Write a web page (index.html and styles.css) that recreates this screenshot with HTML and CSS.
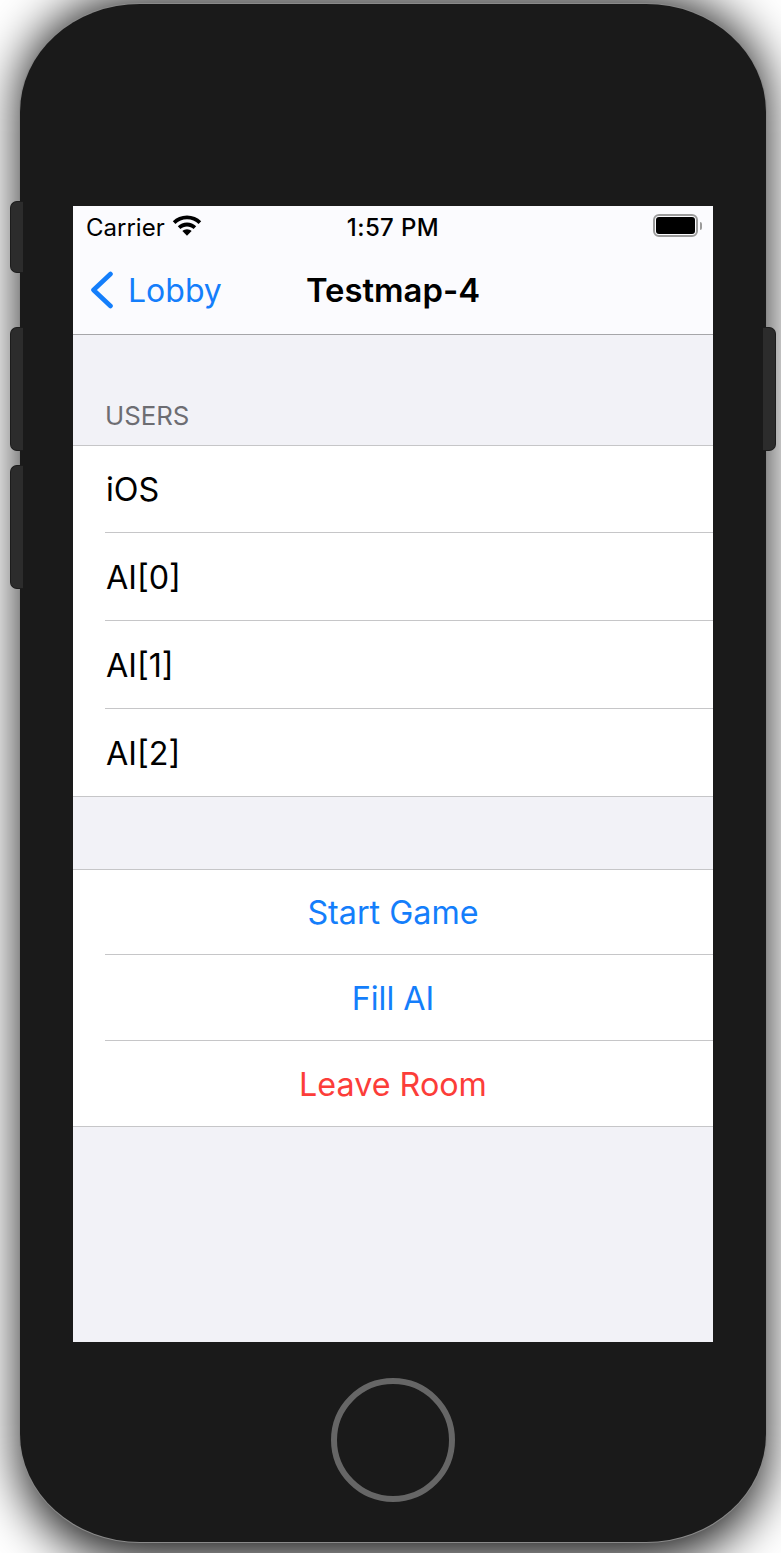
FILE: index.html
```html
<!DOCTYPE html>
<html lang="en">
<head>
  <meta charset="UTF-8">
  <title>Testmap-4</title>
  <link rel="stylesheet" href="styles.css">
</head>
<body>

  <div class="phone">
    <span class="side-btn mute"></span>
    <span class="side-btn vol-up"></span>
    <span class="side-btn vol-down"></span>
    <span class="side-btn power"></span>

    <div class="screen">
      <header class="top">
        <div class="status">
          <div class="status-left">
            <span>Carrier</span>
            <svg class="wifi" width="30" height="22" viewBox="0 0 30 22">
              <path d="M15 1.5C9.4 1.5 4.4 3.7.8 7.3l2.6 2.8C6.4 7.1 10.5 5.3 15 5.3s8.6 1.8 11.6 4.8l2.6-2.8C25.6 3.7 20.6 1.500 15 1.500z" fill="#000"/>
              <path d="M15 8.600c-3.500 0-6.800 1.400-9.200 3.700l2.600 2.800c1.700-1.700 4-2.700 6.600-2.700s4.900 1 6.600 2.700l2.600-2.800C21.800 10 18.500 8.600 15 8.600z" fill="#000"/>
              <path d="M15 15.200c-1.800 0-3.400.7-4.600 1.800L15 21.800l4.600-4.800c-1.200-1.100-2.800-1.800-4.600-1.800z" fill="#000"/>
            </svg>
          </div>
          <span class="clock">1:57 PM</span>
          <div class="battery">
            <span class="battery-body"><span class="battery-fill"></span></span>
            <span class="battery-cap"></span>
          </div>
        </div>
        <nav class="navbar">
          <a class="back">
            <svg width="26" height="38" viewBox="0 0 26 38">
              <path d="M21.5 3 L4.5 19 L21.5 35" fill="none" stroke="#147efb" stroke-width="4.6" stroke-linecap="round" stroke-linejoin="round"/>
            </svg>
            <span>Lobby</span>
          </a>
          <h1 class="title">Testmap-4</h1>
        </nav>
      </header>

      <div class="section-head">USERS</div>
      <ul class="list">
        <li class="row">iOS</li>
        <li class="row">AI[0]</li>
        <li class="row">AI[1]</li>
        <li class="row">AI[2]</li>
      </ul>

      <div class="spacer"></div>

      <ul class="list actions">
        <li class="row action">Start Game</li>
        <li class="row action">Fill AI</li>
        <li class="row action danger">Leave Room</li>
      </ul>
    </div>

    <div class="home-btn"></div>
  </div>

</body>
</html>
```

FILE: styles.css
```css
* {
  box-sizing: border-box;
}
html, body {
  margin: 0;
  height: 100%;
}
body {
  background-color: #fff;
  font-family: Inter, "Liberation Sans", sans-serif;
  color: #000;
  overflow: hidden;
  padding: 4px 15px 0 20px;
}

/* device */
.phone {
  position: relative;
  width: 746px;
  height: 1538px;
  padding: 202px 53px 0;
  background-color: #1a1a1a;
  border-radius: 120px / 108px;
  box-shadow: 0 0 0 1px #8a8a8a;
}
/* shadow reaches further above and below than at the sides */
.phone::before {
  content: "";
  position: absolute;
  top: -7px;
  bottom: -18px;
  left: 0;
  right: 0;
  z-index: -1;
  border-radius: 120px / 108px;
  background-color: rgba(0,0,0,0.9);
  filter: blur(25px);
}
.side-btn {
  position: absolute;
  width: 13px;
  background-color: #2c2c2c;
  border: 1px solid #1c1c1c;
}
.mute, .vol-up, .vol-down {
  left: -10px;
  border-radius: 7px 0 0 7px;
  border-right: none;
}
.mute {
  top: 197px;
  height: 72px;
}
.vol-up {
  top: 323px;
  height: 124px;
}
.vol-down {
  top: 461px;
  height: 124px;
}
.power {
  right: -10px;
  top: 323px;
  height: 124px;
  border-radius: 0 7px 7px 0;
  border-left: none;
}
.home-btn {
  width: 124px;
  height: 124px;
  margin: 36px auto 0;
  border: 6px solid #666;
  border-radius: 50%;
}

/* screen */
.screen {
  width: 640px;
  height: 1136px;
  background-color: #f2f2f7;
}
.top {
  height: 129px;
  background-color: #fbfbfe;
  border-bottom: 1px solid #a6a6a9;
}
.status {
  position: relative;
  display: flex;
  justify-content: space-between;
  align-items: center;
  height: 42px;
  padding: 0 11px 0 13px;
  font-size: 24px;
}
.status-left {
  display: flex;
  align-items: center;
  gap: 7px;
}
.wifi {
  margin-top: -4px;
}
.clock {
  position: absolute;
  left: 0;
  right: 0;
  text-align: center;
  font-weight: 500;
  letter-spacing: 0.4px;
  pointer-events: none;
}
.battery {
  display: flex;
  align-items: center;
  gap: 2px;
  margin-top: -3px;
}
.battery-body {
  display: block;
  width: 45px;
  height: 23px;
  padding: 1px;
  border: 2px solid #9b9b9b;
  border-radius: 6px;
}
.battery-fill {
  display: block;
  height: 100%;
  background-color: #000;
  border-radius: 3px;
}
.battery-cap {
  width: 2px;
  height: 8px;
  background-color: #9b9b9b;
  border-radius: 0 2px 2px 0;
}
.navbar {
  position: relative;
  display: flex;
  align-items: center;
  height: 84px;
  padding-left: 16px;
}
.back {
  display: flex;
  align-items: center;
  gap: 13px;
  color: #147efb;
  font-size: 32px;
}
.title {
  position: absolute;
  left: 0;
  right: 0;
  margin: 0;
  text-align: center;
  font-size: 32.8px;
  font-weight: 600;
}

/* table */
.section-head {
  display: flex;
  align-items: flex-end;
  height: 111px;
  padding: 0 0 14px 32px;
  color: #6d6d72;
  font-size: 25.8px;
  border-bottom: 1px solid #c6c6c8;
}
.list {
  list-style: none;
  margin: 0;
  padding: 0;
  background-color: #fff;
  border-bottom: 1px solid #c6c6c8;
}
.row {
  position: relative;
  display: flex;
  align-items: center;
  height: 88px;
  padding-left: 33px;
  font-size: 32.3px;
}
.row:first-child {
  height: 86px;
}
.row + .row {
  padding-top: 2px;
}
.row + .row::before {
  content: "";
  position: absolute;
  top: 0;
  left: 32px;
  right: 0;
  height: 1px;
  background-color: #c6c6c8;
}
.spacer {
  height: 73px;
  border-bottom: 1px solid #c6c6c8;
}
.action {
  justify-content: center;
  height: 86px;
  padding-left: 0;
  color: #147efb;
}
.action:first-child {
  height: 84px;
}
.danger {
  color: #fc3d39;
}
```
